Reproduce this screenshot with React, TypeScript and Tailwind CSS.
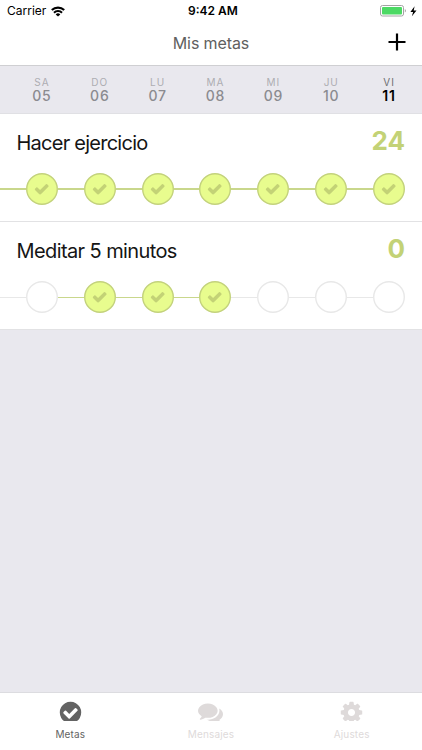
import clsx from "clsx"

const days = [
  { name: "SA", date: "05" },
  { name: "DO", date: "06" },
  { name: "LU", date: "07" },
  { name: "MA", date: "08" },
  { name: "MI", date: "09" },
  { name: "JU", date: "10" },
  { name: "VI", date: "11" },
]

const goals = [
  {
    title: "Hacer ejercicio",
    titleClass: "pt-[17px] tracking-[-0.75px]",
    lineClass: "h-0.5",
    streak: 24,
    done: [true, true, true, true, true, true, true],
  },
  {
    title: "Meditar 5 minutos",
    titleClass: "pt-[17px] tracking-[-0.6px]",
    lineClass: "h-px",
    streak: 0,
    done: [false, true, true, true, false, false, false],
  },
]

const icons = {
  check:
    "M1671 566q0 40-28 68l-724 724-136 136q-28 28-68 28t-68-28l-136-136-362-362q-28-28-28-68t28-68l136-136q28-28 68-28t68 28l294 295 656-657q28-28 68-28t68 28l136 136q28 28 28 68z",
  metas:
    "M1412 734q0-28-18-46l-91-90q-19-19-45-19t-45 19l-408 407-226-226q-19-19-45-19t-45 19l-91 90q-18 18-18 46 0 27 18 45l362 362q19 19 45 19 27 0 46-19l543-543q18-18 18-45zm252 162q0 209-103 385.5t-279.5 279.5-385.5 103-385.5-103-279.5-279.5-103-385.5 103-385.5 279.5-279.5 385.5-103 385.5 103 279.5 279.5 103 385.5z",
  mensajes:
    "M1408 768q0 139-94 257t-256.5 186.5-353.5 68.5q-86 0-176-16-124 88-278 128-36 9-86 16h-3q-11 0-20.5-8t-11.5-21q-1-3-1-6.5t.5-6.5 2-6l2.5-5 3.5-5.5 4-5 4.5-5 4-4.5q5-6 23-25t26-29.5 22.5-29 25-38.5 20.5-44q-124-72-195-177t-71-224q0-139 94-257t256.5-186.5 353.5-68.5 353.5 68.5 256.5 186.5 94 257zm384 256q0 120-71 224.5t-195 176.5q10 24 20.5 44t25 38.5 22.5 29 26 29.5 23 25q1 1 4 4.5t4.5 5 4 5 3.5 5.5l2.5 5 2 6 .5 6.5-1 6.5q-3 14-13 22t-22 7q-50-7-86-16-154-40-278-128-90 16-176 16-271 0-472-132 58 4 88 4 161 0 309-45t264-129q125-92 192-212t67-254q0-77-23-152 129 71 204 178t75 230z",
  ajustes:
    "M1152 896q0-106-75-181t-181-75-181 75-75 181 75 181 181 75 181-75 75-181zm512-109v222q0 12-8 23t-20 13l-185 28q-19 54-39 91 35 50 107 138 10 12 10 25t-9 23q-27 37-99 108t-94 71q-12 0-26-9l-138-108q-44 23-91 38-16 136-29 186-7 28-36 28h-222q-14 0-24.5-8.5t-11.5-21.5l-28-184q-49-16-90-37l-141 107q-10 9-25 9-14 0-25-11-126-114-165-168-7-10-7-23 0-12 8-23 15-21 51-66.5t54-70.5q-27-50-41-99l-183-27q-13-2-21-12.5t-8-23.5v-222q0-12 8-23t19-13l186-28q14-46 39-92-40-57-107-138-10-12-10-24 0-10 9-23 26-36 98.5-107.5t94.5-71.5q13 0 26 10l138 107q44-23 91-38 16-136 29-186 7-28 36-28h222q14 0 24.5 8.5t11.5 21.5l28 184q49 16 90 37l142-107q9-9 24-9 13 0 25 10 129 119 165 170 7 8 7 22 0 12-8 23-15 21-51 66.5t-54 70.5q26 50 41 98l183 28q13 2 21 12.5t8 23.5z",
}

const tabs = [
  { label: "Metas", icon: icons.metas, active: true },
  { label: "Mensajes", icon: icons.mensajes, active: false },
  { label: "Ajustes", icon: icons.ajustes, active: false },
]

function StatusBar() {
  return (
    <div className="grid h-[22px] grid-cols-3 items-center pl-[7px] pr-[5px] text-[12px] leading-none text-black">
      <div className="flex items-center gap-[5px]">
        <span>Carrier</span>
        <svg className="h-[11px] w-[14px]" viewBox="0 0 14 11" fill="none" stroke="currentColor" strokeWidth="2.1">
          <path d="M0.8 4.1a8.9 8.9 0 0 1 12.4 0" />
          <path d="M3 6.7a5.7 5.7 0 0 1 8 0" />
          <path d="M4.7 8.4a3.2 3.2 0 0 1 4.6 0L7 10.6z" fill="currentColor" stroke="none" />
        </svg>
      </div>
      <span className="pl-0.5 text-center text-[12px] font-semibold">9:42 AM</span>
      <div className="flex items-center justify-end gap-1">
        <svg className="h-3 w-[26px]" viewBox="0 0 26 12">
          <rect x="0.5" y="0.5" width="23" height="10.5" rx="2" fill="#fff" stroke="#a3a3a3" />
          <rect x="2" y="2" width="20" height="7.5" rx="1" fill="#4cd964" />
          <path d="M24.8 4v3.6a2 2 0 0 0 0-3.6z" fill="#a3a3a3" />
        </svg>
        <svg className="h-[11px] w-[7px]" viewBox="0 0 7 11" fill="currentColor">
          <path d="M4.6 0.3 0.4 6.1h2.7L1.9 10.2l4.6-5.8H3.7z" />
        </svg>
      </div>
    </div>
  )
}

function Day({ done, lineClass }: { done: boolean; lineClass: string }) {
  return (
    <div className="flex flex-1 items-center">
      <div className={clsx("flex-1", lineClass, done ? "bg-[#c9d78c]" : "bg-[#e8e8e8]")} />
      <svg className="size-8" viewBox="0 0 32 32">
        <circle
          cx="16"
          cy="16"
          r="15.3"
          strokeWidth="1.4"
          fill={done ? "#e8fc8e" : "#fff"}
          stroke={done ? "#c3d27c" : "#e8e8e8"}
        />
        {done && (
          <svg x="7.7" y="8" width="16" height="16" viewBox="0 0 1792 1792" fill="#c3d276">
            <path d={icons.check} />
          </svg>
        )}
      </svg>
    </div>
  )
}

export default function App() {
  return (
    <div className="flex h-screen w-full flex-col overflow-hidden bg-[#e9e8ee] font-['Inter',sans-serif]">
      <header className="h-[66px] border-b border-[#cfcfd2] bg-white">
        <StatusBar />
        <div className="grid h-10 grid-cols-3 items-center pr-4">
          <span className="col-start-2 pl-4 pt-0.5 text-center text-[16px] tracking-[-0.1px] text-[#606060]">
            Mis metas
          </span>
          <svg className="size-[18px] justify-self-end" viewBox="0 0 18 18" stroke="#000" strokeWidth="2.2">
            <path d="M9 0.5v17M0.5 9h17" />
          </svg>
        </div>
      </header>

      <div className="flex h-12 border-b border-[#e0e0e4] pl-[13px] pr-1 pt-2.5">
        {days.map((day, i) => {
          const today = i === days.length - 1
          return (
            <div key={day.name} className="flex flex-1 flex-col items-center">
              <span
                className={clsx("text-[10px] leading-[12px] tracking-[1px]", today ? "text-[#6f6f72]" : "text-[#adadb2]")}
              >
                {day.name}
              </span>
              <span
                className={clsx(
                  "text-[14px] leading-[15px] tracking-[0.8px]",
                  today ? "font-semibold text-black" : "font-medium text-[#8b8b90]",
                )}
              >
                {day.date}
              </span>
            </div>
          )
        })}
      </div>

      <main className="flex-1">
        {goals.map((goal) => (
          <section key={goal.title} className="h-[108px] border-b border-[#e2e2e4] bg-white">
            <div className="flex h-[59px] items-start justify-between pl-[16.5px] pr-[17px]">
              <h2 className={clsx("text-[20px] leading-6 text-[#151515]", goal.titleClass)}>{goal.title}</h2>
              <span className="pt-[11px] text-[26px] leading-8 font-bold text-[#c3d276]">{goal.streak}</span>
            </div>
            <div className="flex pr-[17px]">
              {goal.done.map((done, i) => (
                <Day key={i} done={done} lineClass={goal.lineClass} />
              ))}
            </div>
          </section>
        ))}
      </main>

      <nav className="grid h-[58px] grid-cols-3 border-t border-[#dcdce0] bg-white">
        {tabs.map((tab) => (
          <div
            key={tab.label}
            className={clsx("flex flex-col items-center pt-[7px]", tab.active ? "text-[#636363]" : "text-[#dedada]")}
          >
            <div className="h-[21px] overflow-hidden">
              <svg className="size-[25px]" viewBox="0 0 1792 1792" fill="currentColor">
                <path d={tab.icon} />
              </svg>
            </div>
            <span className="mt-[7px] text-[10px] leading-3 tracking-[0.15px]">{tab.label}</span>
          </div>
        ))}
      </nav>
    </div>
  )
}
